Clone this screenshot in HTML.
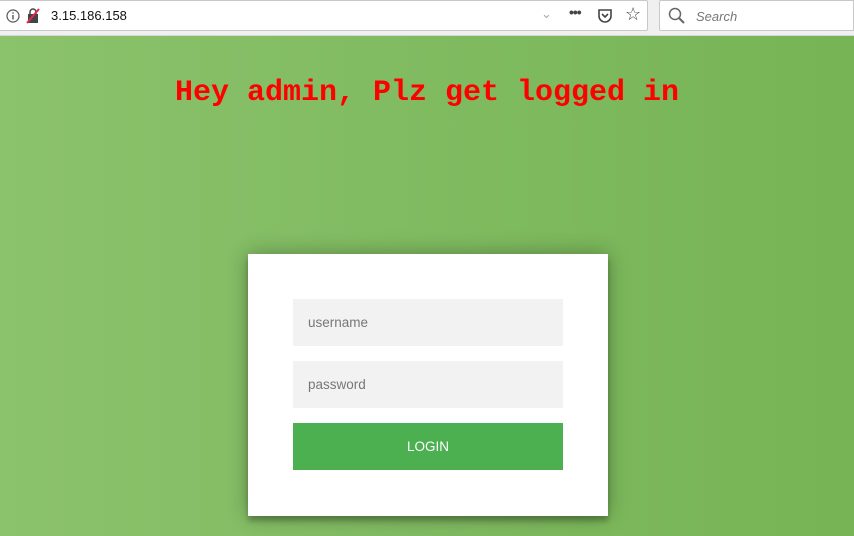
<!DOCTYPE html>
<html><head><style>
html,body{margin:0;padding:0;width:854px;height:536px;overflow:hidden;font-family:"Liberation Sans",sans-serif}
.bar{position:absolute;left:0;top:0;width:854px;height:36px;background:#f0f0f0;border-bottom:1px solid #d6d6d6;box-sizing:border-box}
.url{position:absolute;left:-1px;top:0;width:649px;height:31px;background:#fff;border:1px solid #c8c8c8;box-sizing:border-box;border-radius:0 2px 2px 0}
.search{position:absolute;left:659px;top:0;width:195px;height:31px;background:#fff;border:1px solid #c8c8c8;box-sizing:border-box;border-radius:2px 0 0 2px}
.bg{position:absolute;left:0;top:36px;width:854px;height:500px;background:linear-gradient(90deg,#8bc26c,#76b455)}
h1{position:absolute;left:0;width:854px;top:76px;margin:0;text-align:center;font:bold 30px "Liberation Mono",monospace;color:#ff0000}
.card{position:absolute;left:248px;top:254px;width:360px;height:262px;background:#fff;box-shadow:0 0 20px rgba(0,0,0,.3),0 5px 5px rgba(0,0,0,.24)}
.in{position:absolute;left:45px;width:270px;height:47px;background:#f2f2f2;color:#777;font-size:13.5px;line-height:47px;padding-left:15px;box-sizing:border-box}
.btn{position:absolute;left:45px;top:169px;width:270px;height:47px;background:#4caf50;color:#fff;font-size:13.5px;line-height:47px;text-align:center}
</style></head><body>
<div class="bar">
<div class="url">
<svg style="position:absolute;left:6px;top:8px" width="14" height="14"><circle cx="7" cy="7" r="6" fill="none" stroke="#555" stroke-width="1.2"/><rect x="6.3" y="6" width="1.4" height="4.5" fill="#555"/><rect x="6.3" y="3.3" width="1.4" height="1.4" fill="#555"/></svg>
<svg style="position:absolute;left:26px;top:7px" width="14" height="16"><rect x="2" y="6" width="10" height="9" fill="#444"/><path d="M4 6V4a3 3 0 0 1 6 0v2" fill="none" stroke="#444" stroke-width="1.5"/><path d="M1 15L13 1" stroke="#e22850" stroke-width="2"/></svg>
<span style="position:absolute;left:51px;top:7px;font-size:13px;color:#111">3.15.186.158</span>
<span style="position:absolute;left:541px;top:5px;font-size:13px;color:#aaa">&#8964;</span>
<span style="position:absolute;left:569px;top:3px;font-size:14px;color:#444;font-weight:bold;letter-spacing:-1px">•••</span>
<svg style="position:absolute;left:597px;top:7px" width="16" height="16"><path d="M2 2h12v6a6 6 0 0 1-12 0z" fill="none" stroke="#444" stroke-width="1.6"/><path d="M5 6l3 3 3-3" fill="none" stroke="#444" stroke-width="1.6"/></svg>
<span style="position:absolute;left:625px;top:3px;font-size:18px;color:#444">&#9734;</span>
</div>
<div class="search">
<svg style="position:absolute;left:8px;top:6px" width="18" height="18"><circle cx="7" cy="7" r="5.5" fill="none" stroke="#666" stroke-width="1.5"/><path d="M11 11l5 5" stroke="#666" stroke-width="2"/></svg>
<span style="position:absolute;left:36px;top:8px;font-size:13px;color:#777;font-style:italic">Search</span>
</div>
</div>
<div class="bg"></div>
<h1>Hey admin, Plz get logged in</h1>
<div class="card">
<div class="in" style="top:45px">username</div>
<div class="in" style="top:107px">password</div>
<div class="btn">LOGIN</div>
</div>
</body></html>
